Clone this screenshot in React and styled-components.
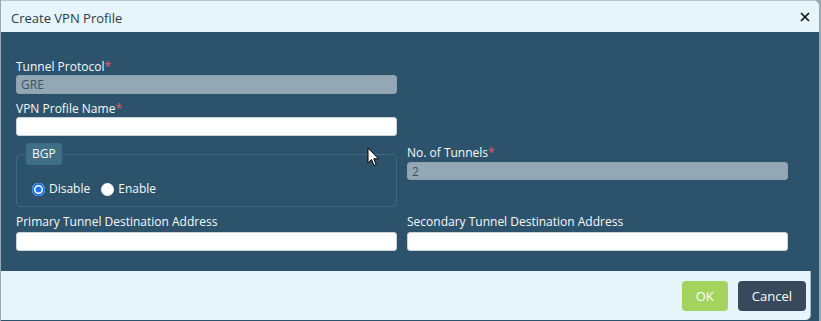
import React from "react";
import styled, { createGlobalStyle } from "styled-components";

const GlobalStyle = createGlobalStyle`
  html, body {
    margin: 0;
    padding: 0;
    background: #9aa8b2;
    overflow: hidden;
  }
  body {
    font-family: "Open Sans", "Noto Sans", sans-serif;
  }
  * {
    box-sizing: border-box;
  }
`;

const Dialog = styled.div`
  position: relative;
  width: 819px;
  height: 321px;
  background: #2c536b;
  border-top-right-radius: 5px;
  border-left: 1px solid #9aa8b2;
  display: flex;
  flex-direction: column;
`;

const Header = styled.div`
  height: 32px;
  border-top: 1px solid #b9c6ce;
  background: #e6f4fb;
  border-top-right-radius: 5px;
  display: flex;
  align-items: center;
  justify-content: space-between;
  padding: 3px 9px 0 10px;
`;

const Title = styled.div`
  font-size: 13px;
  color: #2b3b4b;
`;

const Close = styled.button`
  border: 0;
  background: none;
  padding: 0;
  width: 10px;
  height: 10px;
  margin-top: -3px;
  display: flex;
  cursor: pointer;
`;

const Body = styled.div`
  height: 239px;
  padding: 27px 31px 0 15px;
`;

const Form = styled.div`
  display: grid;
  grid-template-columns: 381px 381px;
  column-gap: 10px;
  row-gap: 7px;
  align-items: start;
`;

const Field = styled.div`
  grid-column: ${(p) => p.$col || 1};
  display: flex;
  flex-direction: column;
  gap: ${(p) => p.$gap || 0}px;
  margin-top: ${(p) => p.$offset || 0}px;
`;

const Label = styled.label`
  font-size: 12px;
  line-height: 16px;
  color: #f7f9fa;
`;

const Required = styled.span`
  color: #e8566f;
`;

const Input = styled.input`
  height: ${(p) => p.$h || 19}px;
  width: 100%;
  border-radius: 3px;
  border: 1px solid ${(p) => (p.$locked ? "#8ea1ae" : "#c9d3d9")};
  background: ${(p) => (p.$locked ? "#93a7b4" : "#ffffff")};
  color: #3b5364;
  font-family: "Open Sans", sans-serif;
  font-size: 12px;
  padding: 0 4px;
  outline: none;
`;

const Group = styled.fieldset`
  grid-column: 1;
  margin: 0;
  height: 64px;
  padding: 0 9px;
  border: 1px solid #3c6a80;
  border-radius: 4px;
`;

const Legend = styled.legend`
  background: #3e6f87;
  color: #f7f9fa;
  font-size: 12px;
  line-height: 22px;
  padding: 0 6px;
  border-radius: 3px;
`;

const Radios = styled.div`
  display: flex;
  align-items: center;
  padding: 16px 0 0 6px;
`;

const Option = styled.label`
  display: flex;
  align-items: center;
  gap: 4px;
  font-size: 12px;
  line-height: 16px;
  color: #f7f9fa;
  margin-right: 11px;
`;

const Radio = styled.input`
  appearance: none;
  margin: 0;
  width: 13px;
  height: 13px;
  border-radius: 50%;
  background: #ffffff;
  &:checked {
    box-shadow: inset 0 0 0 2px #1a73e8, inset 0 0 0 3.5px #ffffff,
      inset 0 0 0 7px #1a73e8;
  }
`;

const Footer = styled.div`
  width: 810px;
  height: 49px;
  background: #e6f4fb;
  border-right: 1px solid #a9b8c2;
  border-bottom-right-radius: 5px;
  display: flex;
  justify-content: flex-end;
  align-items: flex-start;
  gap: 10px;
  padding: 10px 4px 0 0;
`;

const Button = styled.button`
  height: 30px;
  border: 0;
  border-radius: 4px;
  background: ${(p) => (p.$primary ? "#a2d45e" : "#37495a")};
  color: #ffffff;
  font-family: "Open Sans", sans-serif;
  font-size: 13px;
  padding: 0 14px;
  min-width: ${(p) => (p.$primary ? 46 : 67)}px;
  cursor: pointer;
`;

const Cursor = styled.svg`
  position: absolute;
  left: 366px;
  top: 147px;
  pointer-events: none;
`;

export default function App() {
  return (
    <>
      <GlobalStyle />
      <Dialog>
        <Header>
          <Title>Create VPN Profile</Title>
          <Close aria-label="close">
            <svg width="10" height="10" viewBox="0 0 10 10">
              <path d="M1 1 L9 9 M9 1 L1 9" stroke="#111" strokeWidth="1.7" />
            </svg>
          </Close>
        </Header>
        <Body>
          <Form>
            <Field>
              <Label>
                Tunnel Protocol<Required>*</Required>
              </Label>
              <Input $locked value="GRE" $h={19} readOnly />
            </Field>
            <Field>
              <Label>
                VPN Profile Name<Required>*</Required>
              </Label>
              <Input />
            </Field>
            <Group>
              <Legend>BGP</Legend>
              <Radios>
                <Option>
                  <Radio type="radio" name="bgp" defaultChecked />
                  Disable
                </Option>
                <Option>
                  <Radio type="radio" name="bgp" />
                  Enable
                </Option>
              </Radios>
            </Group>
            <Field $col={2} $offset={2} $gap={1}>
              <Label>
                No. of Tunnels<Required>*</Required>
              </Label>
              <Input $locked value="2" $h={18} readOnly />
            </Field>
            <Field $gap={2}>
              <Label>Primary Tunnel Destination Address</Label>
              <Input />
            </Field>
            <Field $col={2} $gap={2}>
              <Label>Secondary Tunnel Destination Address</Label>
              <Input />
            </Field>
          </Form>
        </Body>
        <Footer>
          <Button $primary>OK</Button>
          <Button>Cancel</Button>
        </Footer>
        <Cursor width="13" height="20" viewBox="0 0 13 20">
          <path
            d="M1 1 L1 16 L4.5 12.5 L7 18.5 L9.2 17.6 L6.8 11.8 L11.5 11.8 Z"
            fill="#fff"
            stroke="#000"
            strokeWidth="1"
            strokeLinejoin="round"
          />
        </Cursor>
      </Dialog>
    </>
  );
}
